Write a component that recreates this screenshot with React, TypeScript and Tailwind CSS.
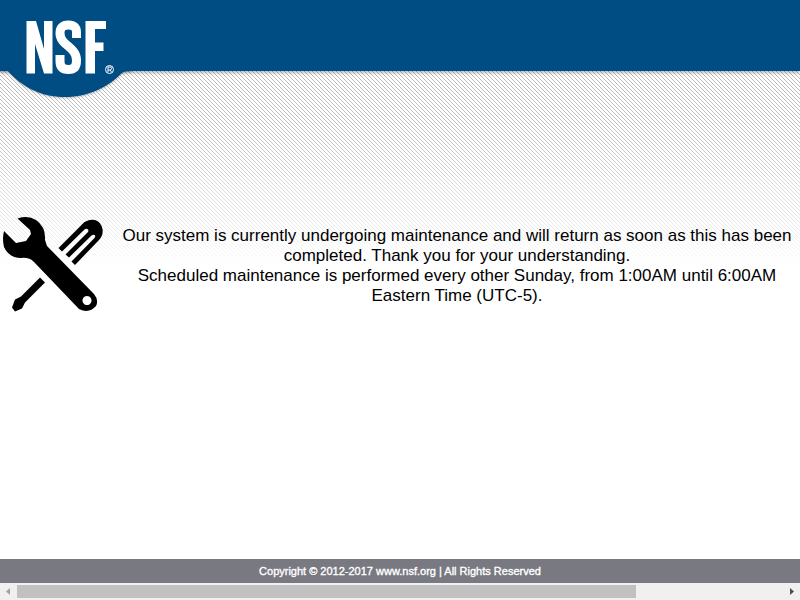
export default function App() {
  return (
    <div className="relative flex h-[600px] w-[800px] flex-col overflow-hidden bg-white font-['Liberation_Sans',Arial,sans-serif] text-black">
      <svg className="absolute left-0 top-[71px]" width="800" height="200" shapeRendering="crispEdges">
        <defs>
          <pattern id="dots" width="4" height="4" patternUnits="userSpaceOnUse">
            <path d="M0 0h1v1H0zM1 1h1v1H1zM2 2h1v1H2zM3 3h1v1H3z" fill="#b9b9b9" />
          </pattern>
          <linearGradient id="fade" x1="0" y1="0" x2="0" y2="1">
            <stop offset="0" stopColor="#fff" stopOpacity="0" />
            <stop offset="0.35" stopColor="#fff" stopOpacity="0.15" />
            <stop offset="1" stopColor="#fff" />
          </linearGradient>
        </defs>
        <rect width="800" height="200" fill="url(#dots)" />
        <rect width="800" height="200" fill="url(#fade)" />
      </svg>
      <header className="relative h-[71px] shrink-0 bg-[#004d84] shadow-[0_2px_3px_rgba(0,0,0,0.25)]">
        <svg className="absolute left-0 top-0 overflow-visible" width="134" height="102">
          <path d="M0 71H8C22 87 41 97 65 97S108 87 122 73Q124 71 132 71V60H0Z" fill="#004d84" className="drop-shadow-[0_1px_1px_rgba(0,0,0,0.25)]" />
          <rect width="134" height="71" fill="#004d84" />
          <path d="M26.500 21H36l8 28V21h8.500v52.500H44L35 44v29.500h-8.500z" fill="#fff" />
          <path d="M76.500 38V32C76.500 27.500 74 25 68.500 25C62.500 25 60 28 60 33C60 46 76.500 46 76.500 60.500C76.500 66.500 74 69.500 68.500 69.500C62.500 69.500 60 66.500 60 61V55" fill="none" stroke="#fff" strokeWidth="9" />
          <path d="M85.500 21H106v8H95v13.500h8.500v8.500H95v22.500h-9.500z" fill="#fff" />
          <circle cx="109.500" cy="69.500" r="4" fill="none" stroke="#fff" />
          <path d="M108 72v-5h2q1.500 0 1.500 1.500T110 70h-2m2 0 1.500 2" fill="none" stroke="#fff" />
        </svg>
      </header>
      <main className="relative flex flex-1 items-start pt-[145px]">
        <svg className="ml-[2px] shrink-0" width="102" height="97" viewBox="2 216 102 97">
          <path d="M58.500 248 82 224.500Q87 219 95 220Q101 222 102.500 229Q103.500 235 99 240L75 265 71.500 261.500 94.500 238Q96 236 94.500 235Q93 234 91 236L69 257.500 65.500 254.500 88 232Q89 230 87.500 229Q86 228 84 230L62 251.500Z" />
          <path d="M17.500 218.500Q28 215 36 220Q46 227 45 240L47 246 94 294Q99 300 96 306Q89 314 79 309L34 262Q29 257 21 258Q9 258 4 247Q2 239 4 231L16 243 26 241 31 234 30 230ZM87 296a4.500 4.500 0 1 0 .01 0Z" fillRule="evenodd" />
          <path d="m40 277.500 5 5-20 20-3 6-7 3-3-4 3-8 6-3Z" />
        </svg>
        <p className="ml-[14px] mt-[10px] w-[678px] shrink-0 text-center text-[17px] leading-5">
          Our system is currently undergoing maintenance and will return as soon as this has been<br />completed. Thank you for your understanding.<br />Scheduled maintenance is performed every other Sunday, from 1:00AM until 6:00AM<br />Eastern Time (UTC-5).
        </p>
      </main>
      <footer className="flex h-6 shrink-0 items-center justify-center bg-[#797982] text-[11px] text-white [-webkit-text-stroke:0.35px_#fff]">
        Copyright © 2012-2017 www.nsf.org | All Rights Reserved
      </footer>
      <div className="relative flex h-[17px] shrink-0 items-center bg-[#f0f0f0]">
        <svg className="w-[17px]" height="17"><path d="M6 8.500 10 5v7z" fill="#a3a3a3" /></svg>
        <div className="h-[13px] w-[619px] bg-[#c1c1c1]" />
        <svg className="ml-auto w-[17px]" height="17"><path d="M11 8.500 7 5v7z" fill="#505050" /></svg>
      </div>
    </div>
  );
}
